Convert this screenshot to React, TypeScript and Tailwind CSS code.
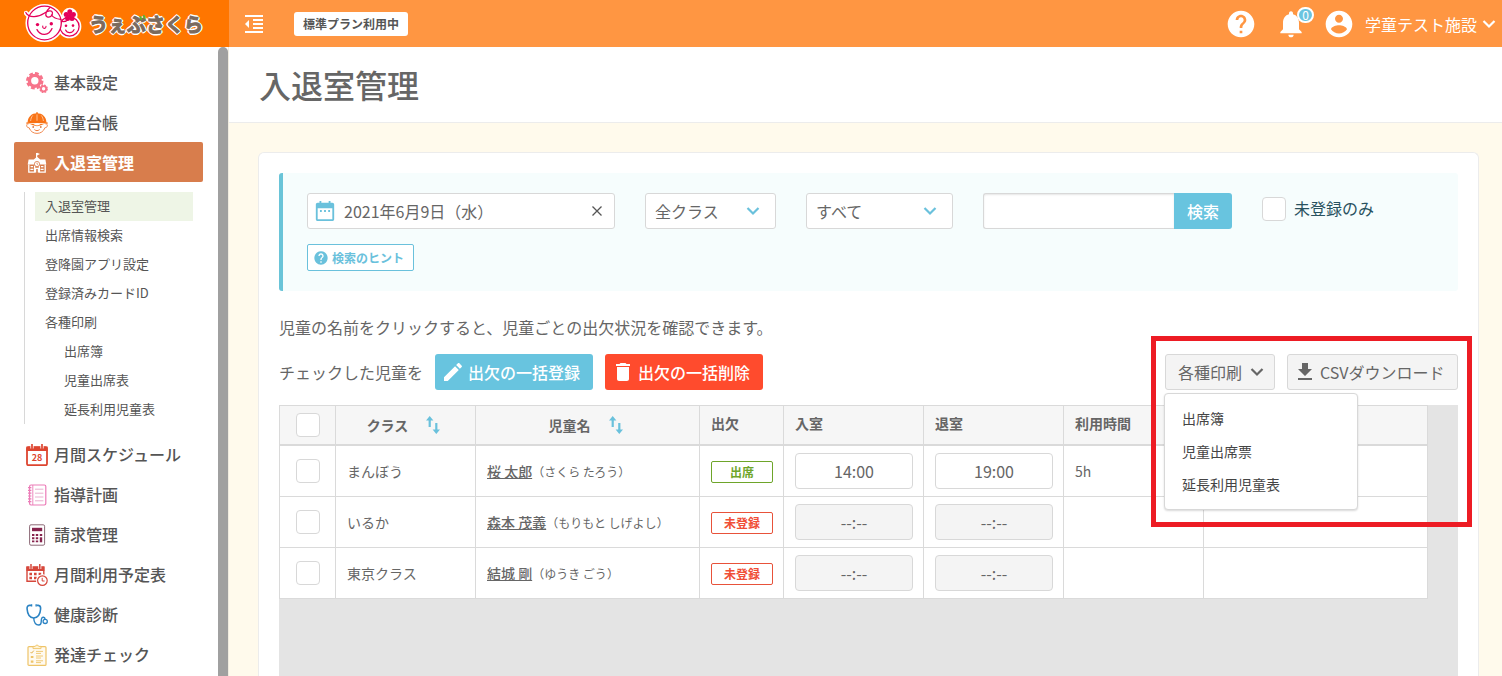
import React from 'react';

type IconProps = { className?: string; children: React.ReactNode };

const Icon = ({ className = 'size-6', children }: IconProps) => (
  <svg viewBox="0 0 24 24" className={`shrink-0 ${className}`} fill="currentColor" aria-hidden="true">
    {children}
  </svg>
);

const Chevron = ({ className }: { className: string }) => (
  <svg viewBox="0 0 14 10" className={`shrink-0 ${className}`} fill="none" stroke="currentColor" aria-hidden="true">
    <path d="M1.5 2 7 7.5 12.5 2" strokeWidth="2.2" />
  </svg>
);

const HelpIcon = ({ className }: { className: string }) => (
  <Icon className={className}>
    <path d="M12 2C6.48 2 2 6.48 2 12s4.48 10 10 10 10-4.48 10-10S17.52 2 12 2zm1 17h-2v-2h2v2zm2.07-7.75l-.9.92C13.45 12.9 13 13.5 13 15h-2v-.5c0-1.1.45-2.1 1.17-2.83l1.24-1.26c.37-.36.59-.86.59-1.41 0-1.1-.9-2-2-2s-2 .9-2 2H8c0-2.21 1.79-4 4-4s4 1.79 4 4c0 .88-.36 1.68-.93 2.25z" />
  </Icon>
);

const SortIcon = () => (
  <svg viewBox="0 0 14 18" className="h-[18px] w-[14px]" fill="#6ac1dc" aria-hidden="true">
    <path d="M3.7 0 7.4 4.4H4.8V11H2.6V4.4H0zM10.3 18 6.6 13.6h2.6V7h2.2v6.6H14z" />
  </svg>
);

const GearsIcon = () => (
  <svg viewBox="0 0 22 22" className="size-[22px] shrink-0" fill="none" stroke="#f7748b" aria-hidden="true">
    <circle cx="8.8" cy="8.8" r="5.4" strokeWidth="3.4" />
    <circle cx="8.8" cy="8.8" r="7.4" strokeWidth="2.6" strokeDasharray="3.7 2.11" />
    <circle cx="17.6" cy="16.8" r="2.6" strokeWidth="1.8" />
    <circle cx="17.6" cy="16.8" r="3.6" strokeWidth="1.4" strokeDasharray="1.8 1.03" />
  </svg>
);

const ChildIcon = () => (
  <svg viewBox="0 0 22 22" className="size-[22px] shrink-0" fill="none" stroke="#ee7a3a" aria-hidden="true">
    <path d="M2.4 12C.8 11.6.4 13 .8 14.2c.3 1.2 1.2 1.6 2.2 1.4C4.4 19.4 7.4 21.4 11 21.4s6.6-2 8-5.8c1 .2 1.9-.2 2.2-1.4.4-1.2 0-2.6-1.6-2.2" strokeWidth="0.9" fill="#fff" />
    <path d="M1.6 10.2C1.8 4.6 5.8 1.2 11 1.2s9.2 3.4 9.4 9z" fill="#f97316" stroke="none" />
    <path d="M.3 10.4c7-1.6 14.4-1.6 21.4 0v1.4c-7-1-14.4-1-21.4 0z" fill="#f97316" stroke="none" />
    <path d="M11 .2v2" stroke="#f97316" strokeWidth="1.6" />
    <path d="M11 2.4v6.4M6.8 3.4C5.4 5 4.8 7 4.6 9M15.2 3.4c1.4 1.6 2 3.6 2.2 5.6" stroke="#ffd1ad" strokeWidth="0.8" />
    <path d="M4 12h3.500l1.500 1 2 .6 2-.6 1.500-1H18l-3 1.200-4 1-4-1z" fill="#f97316" stroke="none" />
    <path d="M7.2 14.2v1.6M14.8 14.2v1.6" stroke="#c75a1c" strokeWidth="1.4" />
    <path d="M8.4 17.6c1.6 1.4 3.6 1.4 5.2 0" strokeWidth="1" />
  </svg>
);

const SchoolIcon = () => (
  <svg viewBox="0 0 22 22" className="size-[22px] shrink-0" fill="none" stroke="#fff" aria-hidden="true">
    <path d="M10.6 1v6" strokeWidth="1.2" />
    <path d="M11 .8l3 1.3L11 3.6z" fill="#fff" stroke="none" />
    <path d="M11 4.8 16 9H6zM2.6 7.6h16.8l.9 4.8H1.700z" fill="#fff" stroke="none" />
    <path d="M2.8 12.4v7.8h5.8v-6.6M19.200 12.4v7.8h-5.8v-6.6" strokeWidth="1.3" />
    <path d="M4.600 14.600h2.400M4.400 17.400h3M15 14.600h2.400M14.600 17.400h3" strokeWidth="1.400" />
    <circle cx="11" cy="12" r="2.600" stroke="#d97b4c" strokeWidth="0.8" fill="#fff" />
    <path d="M11 10.600v1.600h1" stroke="#d97b4c" strokeWidth="0.7" />
    <path d="M9.600 20.400v-4h2.800v4" strokeWidth="1.200" />
  </svg>
);

const CalendarIcon = () => (
  <svg viewBox="0 0 22 22" className="size-[22px] shrink-0" aria-hidden="true">
    <rect x="1" y="3.2" width="20" height="18" rx="1.4" fill="#fff" stroke="#dd4530" strokeWidth="1.8" />
    <path d="M.4 2.6h21.2V7H.4z" fill="#dd4530" />
    <path d="M6 .6v4M16 .6v4" stroke="#fff" strokeWidth="3.2" />
    <path d="M6 .4v3.800M16 .4v3.800" stroke="#dd4530" strokeWidth="1.7" strokeLinecap="round" />
    <text x="11" y="17.2" textAnchor="middle" fontSize="9" fontWeight="700" fill="#dd4530">28</text>
  </svg>
);

const NotebookIcon = () => (
  <svg viewBox="0 0 22 22" className="size-[22px] shrink-0" fill="none" stroke="#ec7cb8" aria-hidden="true">
    <rect x="3.6" y="1" width="16.2" height="20" rx="1.4" strokeWidth="1.2" />
    <path d="M6.8 1v20" strokeWidth="0.9" />
    <path d="M2 3.6h3.4M2 6.4h3.4M2 9.2h3.4M2 12h3.4M2 14.8h3.4M2 17.6h3.4" strokeWidth="1.2" />
    <path d="M9 5.2h8.4M9 9.2h8.4M9 13h8.4M9 16.8h8.4" stroke="#e7a6cb" strokeWidth="0.9" />
  </svg>
);

const CalculatorIcon = () => (
  <svg viewBox="0 0 22 22" className="size-[22px] shrink-0" fill="none" aria-hidden="true">
    <rect x="3.6" y=".8" width="15" height="20.4" rx="1.4" stroke="#8c6876" strokeWidth="1" />
    <path d="M6 3.8h10.2v3.4H6z" fill="#86234d" />
    <path d="M6 11h2.4M9.8 11h2.4M13.8 11h2.4M6 14.2h2.4M9.8 14.2h2.4M6 17.4h2.4M9.8 17.4h2.4" stroke="#86234d" strokeWidth="1.9" />
    <path d="M15 13.3v5" stroke="#86234d" strokeWidth="2.4" />
  </svg>
);

const ScheduleIcon = () => (
  <svg viewBox="0 0 22 22" className="size-[22px] shrink-0" fill="none" stroke="#d6473b" aria-hidden="true">
    <path d="M1 3.2h16.8v14H1z" strokeWidth="1.4" />
    <path d="M.4 2.4h18V7H.4z" fill="#d6473b" stroke="none" />
    <path d="M5 1v4M13.8 1v4" stroke="#fff" strokeWidth="3" />
    <path d="M5 .4v4M13.8 .4v4" strokeWidth="1.5" strokeLinecap="round" />
    <path d="M3.4 10h2.6M8 10h2.6M12.6 10h2.6M3.4 14h2.6M8 14h2.6" strokeWidth="2.5" />
    <circle cx="16.4" cy="16.6" r="5.9" fill="#fff" stroke="#fff" />
    <circle cx="16.4" cy="16.6" r="4.8" fill="#fff" strokeWidth="1.2" />
    <path d="M16.2 13.8v3.2h2.4" strokeWidth="1" />
  </svg>
);

const StethoscopeIcon = () => (
  <svg viewBox="0 0 22 22" className="size-[22px] shrink-0" fill="none" stroke="#2b83c3" strokeWidth="1.6" aria-hidden="true">
    <path d="M5.2 1.4H3.4C1.4 1.6.9 3 1.1 5c.3 4.4 2.2 8.6 6.6 9 4.400-.4 6.600-4.600 6.900-9 .2-2-.3-3.400-2.300-3.600h-1.800" />
    <path d="M5.600.2v2.400M10.100.2v2.400" strokeWidth="1.3" />
    <path d="M7.700 14c.3 4.400 2 7 5 7 3.400 0 2.200-3.600 2.800-6.200.6-2.400 3.400-2 3.600.6" strokeWidth="1.4" />
    <circle cx="19.200" cy="17.400" r="2.100" strokeWidth="1.3" />
  </svg>
);

const ClipboardIcon = () => (
  <svg viewBox="0 0 22 22" className="size-[22px] shrink-0" fill="none" stroke="#eec468" aria-hidden="true">
    <rect x="2" y="2.600" width="18" height="18.800" rx="1" strokeWidth="1.200" fill="#fffaf0" />
    <path d="M7 4.600V2.400h2.200C9.600.6 12.400.6 12.800 2.400H15v2.200z" fill="#fff3d6" strokeWidth="0.9" />
    <path d="m4.600 8 1 1.200 2.200-2.600" stroke="#e0a93c" strokeWidth="0.9" />
    <path d="M10 7.400h7M10 9.400h5M10 12h7M10 14h5M10 16.800h7M10 18.600h5" strokeWidth="0.9" />
    <path d="M4.800 13h2.600M4.800 17.600h2.600" strokeWidth="2.200" />
  </svg>
);

const Logo = () => (
  <a href="#" className="flex h-full items-center gap-[7px] bg-[#ff7600] pl-6 md:w-[229px]">
    <svg viewBox="0 0 58 44" className="h-11 w-[58px] shrink-0" fill="none" stroke="#e4005a" strokeLinecap="round" aria-hidden="true">
      <g stroke="#fff" strokeWidth="4.500" fill="#fff">
        <circle cx="20.500" cy="21" r="16.800" />
        <circle cx="45.500" cy="24.500" r="9.600" />
        <circle cx="45.800" cy="13.400" r="5.500" />
        <path d="M2 11c2 3 5 3.600 8 3" />
      </g>
      <circle cx="45.500" cy="24.500" r="9.600" strokeWidth="1.300" />
      <circle cx="20.500" cy="21" r="16.800" strokeWidth="1.300" fill="#fff" />
      <path d="M1.800 10.500c2.600 5.400 12 5.400 18.400.8 3.600-2.600 7.600-3.400 8.200-.8.600 3-2.600 5.400-5.200 4.400-3-1.200-.8-6.400 2.800-9.400" strokeWidth="1.200" />
      <path d="M27.400 13c2 2.800 5.200 4 9.400 4.400" strokeWidth="1.200" />
      <path d="M13 27.600c3.400 6.600 12 6.400 15-1" strokeWidth="1.300" />
      <path d="M18.800 24c-.8 3 3.400 3.200 3.200.4" strokeWidth="1.100" />
      <path d="M37.600 19.500c3 .4 5.400-.4 7-2.400M41.600 28c1.600 3.600 6.800 3.600 8.400-.4" strokeWidth="1.200" />
      <g fill="#e4005a" stroke="none">
        <circle cx="13.500" cy="22.600" r="1.700" />
        <circle cx="27.300" cy="21.800" r="1.700" />
        <circle cx="42" cy="23.800" r="1.300" />
        <circle cx="49" cy="23.600" r="1.300" />
        <circle cx="45.800" cy="9.800" r="2.500" />
        <circle cx="49.400" cy="12.400" r="2.500" />
        <circle cx="48" cy="16.600" r="2.500" />
        <circle cx="43.600" cy="16.600" r="2.500" />
        <circle cx="42.200" cy="12.400" r="2.500" />
        <circle cx="45.800" cy="13.400" r="2" />
      </g>
    </svg>
    <span className="relative text-[19px] leading-6 font-bold text-[#7b6a5d] [-webkit-text-stroke:1px_#7b6a5d] [text-shadow:2px_0_0_#fff,-2px_0_0_#fff,0_2px_0_#fff,0_-2px_0_#fff,1px_1px_0_#fff,-1px_1px_0_#fff,1px_-1px_0_#fff,-1px_-1px_0_#fff]">
      うぇぶさくら
      <svg viewBox="0 0 8 7" className="absolute top-[2px] left-[50px] h-[7px] w-2" stroke="#62ad2d" strokeWidth="2" strokeLinecap="round" aria-hidden="true">
        <path d="m1.400 3 1 2.200M4.800 1.800l1 2.200" />
      </svg>
    </span>
  </a>
);

const Header = () => (
  <header className="flex h-[47px] shrink-0 items-center bg-[#ff9642] text-white">
    <Logo />
    <button type="button" aria-label="メニューを閉じる" className="ml-[13px]">
      <Icon>
        <path d="M11 17h10v-2H11v2zm-8-5l4 4V8l-4 4zm0 9h18v-2H3v2zM3 3v2h18V3H3zm8 6h10V7H11v2zm0 4h10v-2H11v2z" />
      </Icon>
    </button>
    <span className="ml-7 rounded-[3px] bg-white px-[9px] text-xs leading-6 font-bold text-[#555]">標準プラン利用中</span>
    <nav className="ml-auto flex items-center pr-[6px]">
      <a href="#" aria-label="ヘルプ">
        <HelpIcon className="size-8" />
      </a>
      <a href="#" aria-label="お知らせ" className="relative ml-[18px]">
        <Icon className="size-8">
          <path d="M12 22c1.100 0 2-.9 2-2h-4c0 1.100.9 2 2 2zm6-6v-5c0-3.070-1.630-5.640-4.500-6.320V4c0-.83-.67-1.500-1.500-1.500s-1.500.67-1.500 1.500v.68C7.640 5.360 6 7.920 6 11v5l-2 2v1h16v-1l-2-2z" />
        </Icon>
        <span className="absolute -top-px right-[-7px] flex h-4 w-[17px] items-center justify-center rounded-full border-2 border-white bg-[#6ac4df] text-xs leading-3">0</span>
      </a>
      <button type="button" className="ml-4 flex items-center gap-[10px]">
        <Icon className="size-8">
          <path d="M12 2C6.480 2 2 6.480 2 12s4.480 10 10 10 10-4.480 10-10S17.520 2 12 2zm0 3c1.660 0 3 1.340 3 3s-1.340 3-3 3-3-1.340-3-3 1.340-3 3-3zm0 14.200c-2.500 0-4.710-1.280-6-3.220.03-1.990 4-3.080 6-3.080 1.990 0 5.970 1.090 6 3.080-1.290 1.940-3.500 3.220-6 3.220z" />
        </Icon>
        <span className="flex items-center gap-[5px] text-base">
          学童テスト施設
          <Chevron className="h-[10px] w-[14px]" />
        </span>
      </button>
    </nav>
  </header>
);

const subMenu = [
  { label: '入退室管理', active: true },
  { label: '出席情報検索' },
  { label: '登降園アプリ設定' },
  { label: '登録済みカードID' },
  { label: '各種印刷' },
  { label: '出席簿', nested: true },
  { label: '児童出席表', nested: true },
  { label: '延長利用児童表', nested: true },
];

const menu = [
  { label: '基本設定', icon: <GearsIcon /> },
  { label: '児童台帳', icon: <ChildIcon /> },
  { label: '入退室管理', icon: <SchoolIcon />, children: subMenu },
  { label: '月間スケジュール', icon: <CalendarIcon /> },
  { label: '指導計画', icon: <NotebookIcon /> },
  { label: '請求管理', icon: <CalculatorIcon /> },
  { label: '月間利用予定表', icon: <ScheduleIcon /> },
  { label: '健康診断', icon: <StethoscopeIcon /> },
  { label: '発達チェック', icon: <ClipboardIcon /> },
];

const Sidebar = () => (
  <aside className="flex w-[228px] shrink-0 overflow-hidden bg-white">
    <ul className="flex-1 pt-[15px] pr-[15px] pl-[14px]">
      {menu.map((item) => (
        <li key={item.label}>
          <a
            href="#"
            className={`flex h-10 items-center gap-[6px] rounded-[2px] pl-3 text-base ${
              item.children ? 'bg-[#d87d4c] font-bold text-white' : 'font-medium text-[#555]'
            }`}
          >
            <span className="pt-0.5">{item.icon}</span>
            {item.label}
          </a>
          {item.children && (
            <ul className="my-[10px] mr-[10px] ml-[10px] border-l border-[#d8d8d8] pl-[10px]">
              {item.children.map((sub) => (
                <li key={sub.label}>
                  <a
                    href="#"
                    className={`block pb-0.5 text-[13px] leading-[27px] text-[#555] ${sub.active ? 'bg-[#eef5e6]' : ''} ${
                      sub.nested ? 'pl-[29px]' : 'pl-[10px]'
                    }`}
                  >
                    {sub.label}
                  </a>
                </li>
              ))}
            </ul>
          )}
        </li>
      ))}
    </ul>
    <div className="w-[10px] rounded-t-[5px] bg-[#a0a0a0]" />
  </aside>
);

const Checkbox = ({ id, label }: { id: string; label?: string }) => (
  <input id={id} type="checkbox" aria-label={label} className="block size-6 shrink-0 appearance-none rounded border border-[#d8d8d8] bg-white" />
);

const SelectBox = ({ label, value, className }: { label: string; value: string; className: string }) => (
  <div className={`relative ${className}`}>
    <select aria-label={label} className="h-9 w-full appearance-none rounded-[3px] border border-[#d8d8d8] bg-white pl-[9px] text-base">
      <option>{value}</option>
    </select>
    <Chevron className="pointer-events-none absolute top-[13px] right-4 h-[10px] w-[14px] text-[#6ac1dc]" />
  </div>
);

const Filters = () => (
  <form className="rounded-[3px] border-l-4 border-[#6ac4d8] bg-[#f6fdfd] py-5 pl-6">
    <div className="flex items-start gap-[30px]">
      <div className="flex h-9 w-[308px] items-center rounded-[3px] border border-[#d8d8d8] bg-white px-[6px]">
        <Icon className="size-[22px] text-[#6ac1dc]">
          <path d="M8.500 11H6.500v2h2zM13 11h-2v2h2zM17.500 11h-2v2h2zM20 3h-2V1h-2v2H8V1H6v2H4C2.900 3 2 3.900 2 5v16c0 1.100.9 2 2 2h16c1.100 0 2-.9 2-2V5c0-1.100-.9-2-2-2zM20 21H4V9h16z" />
        </Icon>
        <input aria-label="日付" defaultValue="2021年6月9日（水）" className="ml-2 min-w-0 flex-1 text-base outline-none" />
        <button type="button" aria-label="クリア" className="mr-[5px]">
          <svg viewBox="0 0 12 12" className="size-3" stroke="#555" strokeWidth="1.300" aria-hidden="true">
            <path d="m1.500 1.500 9 9m0-9-9 9" />
          </svg>
        </button>
      </div>
      <SelectBox label="クラス" value="全クラス" className="w-[131px]" />
      <SelectBox label="出欠" value="すべて" className="w-[147px]" />
      <div className="flex">
        <input
          aria-label="キーワード"
          className="h-9 w-[191px] rounded-l-[3px] border border-r-0 border-[#d8d8d8] bg-white px-2 shadow-[inset_0_1px_2px_rgba(0,0,0,0.1)]"
        />
        <button type="button" className="h-9 w-[58px] rounded-r-[3px] bg-[#68c4df] text-base font-medium text-white">
          検索
        </button>
      </div>
      <div className="flex items-start gap-2 pt-1">
        <Checkbox id="unregistered" />
        <label htmlFor="unregistered" className="text-base leading-[22px] text-[#29525f]">
          未登録のみ
        </label>
      </div>
    </div>
    <button type="button" className="mt-[15px] flex h-[27px] w-[107px] items-center gap-[3px] rounded-[2px] border border-[#6ac1dc] bg-white pl-[5px] text-xs font-bold text-[#6ac1dc]">
      <HelpIcon className="size-4" />
      検索のヒント
    </button>
  </form>
);

const printMenu = ['出席簿', '児童出席票', '延長利用児童表'];

const Toolbar = () => (
  <div className="mt-[15px] flex items-center">
    <span className="text-base">チェックした児童を</span>
    <button type="button" className="ml-3 flex h-9 w-[158px] items-center gap-[3px] rounded-[3px] bg-[#68c4df] pl-[6px] text-base font-medium text-white">
      <Icon>
        <path d="M3 17.250V21h3.750L17.810 9.940l-3.750-3.750L3 17.250zM20.710 7.040c.39-.39.39-1.020 0-1.410l-2.340-2.340c-.39-.39-1.020-.39-1.410 0l-1.830 1.830 3.750 3.750 1.830-1.830z" />
      </Icon>
      出欠の一括登録
    </button>
    <button type="button" className="ml-3 flex h-9 w-[158px] items-center gap-[3px] rounded-[3px] bg-[#ff4b2d] pl-[6px] text-base font-medium text-white">
      <Icon>
        <path d="M6 19c0 1.100.9 2 2 2h8c1.100 0 2-.9 2-2V7H6v12zM19 4h-3.500l-1-1h-5l-1 1H5v2h14V4z" />
      </Icon>
      出欠の一括削除
    </button>
    <div className="relative ml-auto flex gap-3">
      <button type="button" className="flex h-9 w-[110px] items-center gap-2 rounded-[3px] border border-[#d8d8d8] bg-[#f4f4f4] pl-3 text-base">
        各種印刷
        <Chevron className="h-[10px] w-[14px]" />
      </button>
      <button type="button" className="flex h-9 w-[171px] items-center gap-[3px] rounded-[3px] border border-[#d8d8d8] bg-[#f4f4f4] pl-[5px] text-base">
        <Icon>
          <path d="M19 9h-4V3H9v6H5l7 7 7-7zM5 18v2h14v-2H5z" />
        </Icon>
        CSVダウンロード
      </button>
      <ul className="absolute top-[39px] -left-px z-10 w-[194px] rounded border border-[#d8d8d8] bg-white py-2 shadow-[0_1px_2px_rgba(0,0,0,0.15)]">
        {printMenu.map((label) => (
          <li key={label}>
            <a href="#" className="block pl-[17px] text-sm leading-[33px] text-[#444]">
              {label}
            </a>
          </li>
        ))}
      </ul>
      <div className="pointer-events-none absolute -top-[18px] -right-[14px] -left-[14px] z-20 h-[191px] border-[5px] border-[#ed1c24]" />
    </div>
  </div>
);

const rows = [
  { group: 'まんぼう', name: '桜 太郎', kana: 'さくら たろう', status: '出席', in: '14:00', out: '19:00', hours: '5h' },
  { group: 'いるか', name: '森本 茂義', kana: 'もりもと しげよし', status: '未登録', in: '', out: '', hours: '' },
  { group: '東京クラス', name: '結城 剛', kana: 'ゆうき ごう', status: '未登録', in: '', out: '', hours: '' },
];

const cell = 'border-r border-b border-[#dadada]';
const headCell = 'border-r border-b-2 border-[#dadada] text-left';

const TimeInput = ({ label, value }: { label: string; value: string }) => (
  <input
    aria-label={label}
    defaultValue={value}
    placeholder="--:--"
    className={`block h-9 w-full rounded border border-[#d8d8d8] text-center text-base placeholder:text-[#666] ${value ? 'bg-white' : 'bg-[#f4f4f4]'}`}
  />
);

const AttendanceTable = () => (
  <div className="mt-[15px] flex-1 bg-[#e4e4e4]">
    <table className="w-[1149px] table-fixed border-separate border-spacing-0 border-t border-l border-[#dadada] bg-white text-sm">
      <colgroup>
        <col className="w-14" />
        <col className="w-[140px]" />
        <col className="w-56" />
        <col className="w-21" />
        <col className="w-[140px]" />
        <col className="w-[140px]" />
        <col className="w-[140px]" />
        <col className="w-56" />
      </colgroup>
      <thead className="bg-[#f6f6f6]">
        <tr className="h-10">
          <th className={`${headCell} px-4`}>
            <Checkbox id="all" label="すべて選択" />
          </th>
          <th className={`${headCell} pr-1`}>
            <button type="button" className="mx-auto flex items-center gap-[18px]">
              クラス
              <SortIcon />
            </button>
          </th>
          <th className={`${headCell} pr-1`}>
            <button type="button" className="mx-auto flex items-center gap-[18px]">
              児童名
              <SortIcon />
            </button>
          </th>
          <th className={`${headCell} px-[11px] pb-1`}>出欠</th>
          <th className={`${headCell} px-[11px] pb-1`}>入室</th>
          <th className={`${headCell} px-[11px] pb-1`}>退室</th>
          <th className={`${headCell} px-[11px] pb-1`}>利用時間</th>
          <th className={headCell} />
        </tr>
      </thead>
      <tbody>
        {rows.map((row, i) => (
          <tr key={row.name} className="h-[51px]">
            <td className={`${cell} px-4`}>
              <Checkbox id={`row-${i}`} label={row.name} />
            </td>
            <td className={`${cell} px-[11px]`}>{row.group}</td>
            <td className={`${cell} px-[11px]`}>
              <a href="#" className="font-medium underline">
                {row.name}
              </a>
              <span className="text-xs">（{row.kana}）</span>
            </td>
            <td className={`${cell} pt-0.5 pr-[10px] pl-[11px]`}>
              <span
                className={`block h-[22px] rounded-[2px] border text-center text-xs leading-5 font-bold ${
                  row.status === '出席' ? 'border-[#6ea52a] text-[#6ea52a]' : 'border-[#e8523a] text-[#f04e37]'
                }`}
              >
                {row.status}
              </span>
            </td>
            <td className={`${cell} pr-[10px] pl-[11px]`}>
              <TimeInput label="入室" value={row.in} />
            </td>
            <td className={`${cell} pr-[10px] pl-[11px]`}>
              <TimeInput label="退室" value={row.out} />
            </td>
            <td className={`${cell} px-[11px]`}>{row.hours}</td>
            <td className={cell} />
          </tr>
        ))}
      </tbody>
    </table>
  </div>
);

const App = () => {
  return (
    <div lang="ja" className="flex h-screen flex-col overflow-hidden bg-white font-['Noto_Sans_CJK_JP',sans-serif] text-[#666]">
      <Header />
      <div className="flex min-h-0 flex-1">
        <Sidebar />
        <main className="flex min-w-0 flex-1 flex-col overflow-hidden border-l border-[#f0ece0] bg-[#fffaec]">
          <h1 className="h-[76px] shrink-0 border-b border-[#ececec] bg-white pl-[30px] text-[32px] leading-[74px] font-medium">入退室管理</h1>
          <div className="mt-[29px] mr-[23px] ml-[29px] flex flex-1 flex-col rounded-t-md border border-b-0 border-[#ececec] bg-white px-5 pt-5">
            <Filters />
            <p className="mt-6 text-base leading-6">児童の名前をクリックすると、児童ごとの出欠状況を確認できます。</p>
            <Toolbar />
            <AttendanceTable />
          </div>
        </main>
      </div>
    </div>
  );
};

export default App;
